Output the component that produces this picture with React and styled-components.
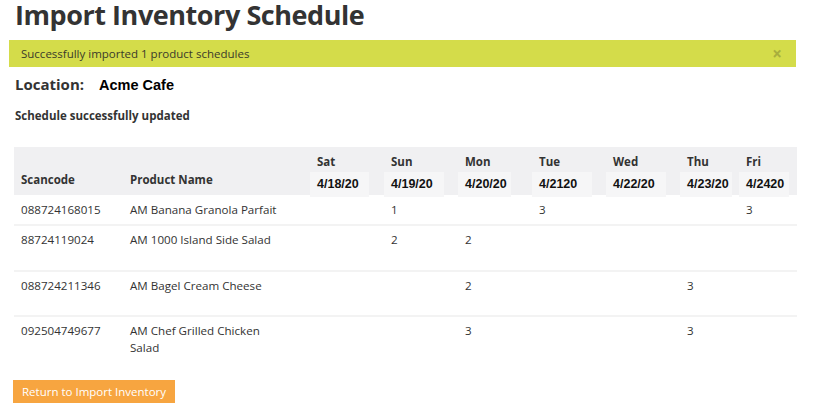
import styled, { createGlobalStyle } from "styled-components";

const GlobalStyle = createGlobalStyle`
  body {
    margin: 0;
    background: #ffffff;
    font-family: "Open Sans", "Liberation Sans", sans-serif;
    color: #333333;
  }
`;

const Page = styled.div`
  width: 819px;
  height: 417px;
  overflow: hidden;
  padding: 0 0 0 14px;
  box-sizing: border-box;
`;

const Title = styled.h1`
  margin: 0;
  font-size: 27px;
  line-height: 29px;
  font-weight: 700;
  color: #333333;
  margin-left: 1px;
  letter-spacing: -0.45px;
`;

const Banner = styled.div`
  display: flex;
  align-items: center;
  justify-content: space-between;
  margin: 11px 23px 0 -5px;
  height: 27px;
  padding: 0 14px 0 12px;
  background: #d4dc4a;
  font-size: 11.5px;
  color: #3a3a2a;
`;

const Close = styled.span`
  font-size: 17px;
  font-weight: 700;
  color: #a8ae3d;
  line-height: 1;
`;

const LocationRow = styled.div`
  display: flex;
  align-items: baseline;
  margin-top: 7px;
  margin-left: 1px;
`;

const LocationLabel = styled.span`
  width: 84px;
  font-size: 15px;
  font-weight: 700;
  color: #333333;
`;

const LocationValue = styled.span`
  font-family: "Liberation Sans", Arial, sans-serif;
  font-size: 14.5px;
  font-weight: 700;
  color: #000000;
`;

const Notice = styled.div`
  margin-top: 14px;
  margin-left: 1px;
  font-size: 11.5px;
  font-weight: 700;
  color: #333333;
`;

const Table = styled.table`
  margin-top: 24px;
  border-collapse: collapse;
  table-layout: fixed;
  width: 783px;
`;

const HeadRow = styled.tr`
  background: #f0f0f2;
  height: 48px;
`;

const Th = styled.th`
  box-sizing: border-box;
  width: ${({ $w }) => $w}px;
  padding-left: 7px;
  padding-right: 0;
  text-align: left;
  vertical-align: ${({ $top }) => ($top ? "top" : "bottom")};
  font-size: 11.5px;
  font-weight: 700;
  color: #333333;
  padding-bottom: ${({ $top }) => ($top ? 0 : 8)}px;
  padding-top: ${({ $top }) => ($top ? 6 : 0)}px;
`;

const Day = styled.div`
  line-height: 17px;
`;

const DateBox = styled.div`
  margin-top: 2px;
  margin-left: -7px;
  padding: 4px 7px 0;
  height: 25px;
  width: ${({ $w }) => $w}px;
  box-sizing: border-box;
  margin-bottom: -6px;
  background: #f6f6f7;
  font-family: "Liberation Sans", Arial, sans-serif;
  font-size: 12.5px;
  font-weight: 700;
  color: #111111;
  line-height: 16px;
  white-space: nowrap;
`;

const Row = styled.tr`
  height: ${({ $h }) => $h}px;
  border-top: ${({ $first }) => ($first ? "none" : "2px solid #f3f3f3")};
`;

const Td = styled.td`
  box-sizing: border-box;
  padding: ${({ $pt }) => $pt ?? 5}px 4px 0 7px;
  vertical-align: top;
  font-size: 11.6px;
  line-height: 17px;
  color: #333333;
`;

const Button = styled.button`
  margin-top: 19px;
  margin-left: -1px;
  height: 23px;
  padding: 0 9px;
  border: none;
  background: #f7a540;
  color: #ffffff;
  font-family: "Open Sans", "Liberation Sans", sans-serif;
  font-size: 11.5px;
  cursor: pointer;
`;

const days = [
  { day: "Sat", date: "4/18/20", w: 74, box: 59 },
  { day: "Sun", date: "4/19/20", w: 74, box: 60 },
  { day: "Mon", date: "4/20/20", w: 74, box: 53 },
  { day: "Tue", date: "4/2120", w: 74, box: 60 },
  { day: "Wed", date: "4/22/20", w: 74, box: 60 },
  { day: "Thu", date: "4/23/20", w: 59, box: 52 },
  { day: "Fri", date: "4/2420", w: 58, box: 50 },
];

const rows = [
  { code: "088724168015", name: ["AM Banana Granola Parfait"], qty: ["", "1", "", "3", "", "", "3"], h: 30, pt: 6 },
  { code: "88724119024", name: ["AM 1000 Island Side Salad"], qty: ["", "2", "2", "", "", "", ""], h: 46 },
  { code: "088724211346", name: ["AM Bagel Cream Cheese"], qty: ["", "", "2", "", "", "3", ""], h: 45 },
  { code: "092504749677", name: ["AM Chef Grilled Chicken", "Salad"], qty: ["", "", "3", "", "", "3", ""], h: 45 },
];

export default function App() {
  return (
    <>
      <GlobalStyle />
      <Page>
        <Title>Import Inventory Schedule</Title>
        <Banner>
          <span>Successfully imported 1 product schedules</span>
          <Close>×</Close>
        </Banner>
        <LocationRow>
          <LocationLabel>Location:</LocationLabel>
          <LocationValue>Acme Cafe</LocationValue>
        </LocationRow>
        <Notice>Schedule successfully updated</Notice>
        <Table>
          <thead>
            <HeadRow>
              <Th $w={109}>Scancode</Th>
              <Th $w={187}>Product Name</Th>
              {days.map((d) => (
                <Th key={d.day} $w={d.w} $top>
                  <Day>{d.day}</Day>
                  <DateBox $w={d.box}>{d.date}</DateBox>
                </Th>
              ))}
            </HeadRow>
          </thead>
          <tbody>
            {rows.map((r, i) => (
              <Row key={r.code} $h={r.h} $first={i === 0}>
                <Td $pt={r.pt}>{r.code}</Td>
                <Td $pt={r.pt}>
                  {r.name.map((line, k) => (
                    <div key={k}>{line}</div>
                  ))}
                </Td>
                {r.qty.map((q, j) => (
                  <Td key={j} $pt={r.pt}>{q}</Td>
                ))}
              </Row>
            ))}
          </tbody>
        </Table>
        <Button>Return to Import Inventory</Button>
      </Page>
    </>
  );
}
